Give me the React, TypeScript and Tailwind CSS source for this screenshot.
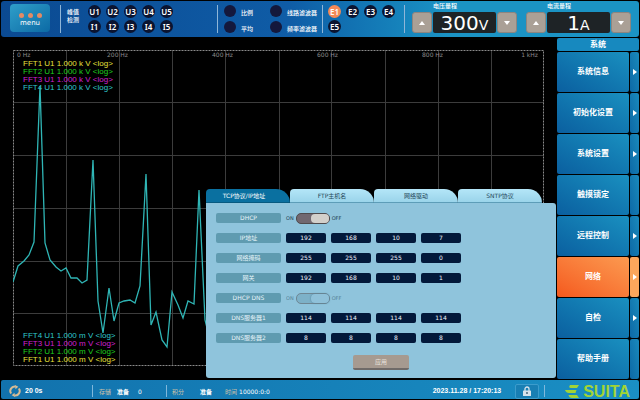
import { useState } from 'react'
import type { ReactNode } from 'react'
import clsx from 'clsx'

const UI_FONT = "font-['DejaVu_Sans','Noto_Sans_CJK_SC',sans-serif]"
const KEY_FONT = "font-['Noto_Sans','Noto_Sans_CJK_SC',sans-serif]"
const ARIAL_FONT = "font-['Liberation_Sans','Noto_Sans_CJK_SC',sans-serif]"

const CHANNELS = ['U1', 'U2', 'U3', 'U4', 'U5', 'I1', 'I2', 'I3', 'I4', 'I5']
const ELEMENTS = ['E1', 'E2', 'E3', 'E4', 'E5']

const MENU = [
  { label: '系统信息', arrow: true },
  { label: '初始化设置', arrow: true },
  { label: '系统设置', arrow: true },
  { label: '触摸锁定', arrow: false },
  { label: '远程控制', arrow: true },
  { label: '网络', arrow: true },
  { label: '自检', arrow: true },
  { label: '帮助手册', arrow: false },
]

const TABS = ['TCP协议/IP地址', 'FTP主机名', '网络驱动', 'SNTP协议']

const TRACES = [
  { name: 'FFT1 U1', color: 'text-[#e6e03c]' },
  { name: 'FFT2 U1', color: 'text-[#1fd01f]' },
  { name: 'FFT3 U1', color: 'text-[#d020d0]' },
  { name: 'FFT4 U1', color: 'text-[#2fc8cc]' },
]

const TICKS = ['0 Hz', '200 Hz', '400 Hz', '600 Hz', '800 Hz']

const SPECTRUM =
  '0,232 5,216 11,211 16,205 21,192 27,36 32,193 37,210 43,217 48,221 53,218 58,228 64,228 69,233 74,230 80,110 85,251 90,283 96,238 101,271 106,253 111,251 117,250 122,253 127,236 133,124 138,275 143,262 149,290 154,297 159,242 165,255 170,268 175,251 181,254 186,140 192,270 197,290 202,262'

function Divider() {
  return <div className="h-7 w-px shrink-0 bg-[#8fb6d8]" />
}

function RoundButton({ label, active = false }: { label: string; active?: boolean }) {
  return (
    <button
      type="button"
      className={clsx(
        'flex size-[13px] items-center justify-center rounded-full text-[8px] leading-none font-semibold text-white',
        KEY_FONT,
        active ? 'bg-[#f58a57]' : 'bg-[#0b1430]',
      )}
    >
      {label}
    </button>
  )
}

function Lamp({ label }: { label: string }) {
  return (
    <button
      type="button"
      className="flex items-center gap-[5px] text-[6px] leading-none font-medium whitespace-nowrap text-white"
    >
      <span className="size-3 shrink-0 rounded-full bg-[#14183c]" />
      <span className="pt-[3px]">{label}</span>
    </button>
  )
}

function StepButton({ up = false, label }: { up?: boolean; label: string }) {
  return (
    <button
      type="button"
      aria-label={label}
      className="flex h-[21px] w-5 items-center justify-center rounded-[3px] border border-[#8d8580] bg-[#aaa096]"
    >
      <svg viewBox="0 0 6 4" className="h-1 w-1.5 fill-white">
        <path d={up ? 'M0 4 3 0 6 4Z' : 'M0 0 3 4 6 0Z'} />
      </svg>
    </button>
  )
}

function RangeControl({ title, value, unit }: { title: string; value: string; unit: string }) {
  return (
    <div className="grid grid-cols-[20px_63px_20px] gap-x-px">
      <div className="col-start-2 h-[10px] text-[6px] leading-[7px] font-medium text-white">{title}</div>
      <div className="col-start-1 row-start-2">
        <StepButton up label={`${title} +`} />
      </div>
      <div className="row-start-2 flex h-[21px] items-baseline justify-center rounded-[2px] bg-[#1e2326] text-[20px] leading-[22px] text-white">
        {value}
        <span className="text-[14px] leading-[14px]">{unit}</span>
      </div>
      <div className="row-start-2">
        <StepButton label={`${title} -`} />
      </div>
    </div>
  )
}

function Header() {
  return (
    <header className="mx-px mt-px flex h-[36px] items-start rounded-[3px] bg-linear-to-r from-[#0b4a92] via-[#0f5ca6] via-45% to-[#1b93c4] to-70% pl-[9px]">
      <button
        type="button"
        className="mt-[3px] flex h-7 w-10 shrink-0 flex-col items-center justify-center gap-px rounded-[4px] bg-linear-to-br from-[#2f9fc9] to-[#0b6aa5] pt-[3px] text-[7px] leading-[8px] text-white"
      >
        <span className="flex gap-1">
          <i className="size-[5px] rounded-full bg-[#e58a64]" />
          <i className="size-[5px] rounded-full bg-[#e58a64]" />
          <i className="size-[5px] rounded-full bg-[#e58a64]" />
        </span>
        menu
      </button>
      <div className="mt-1 ml-[10px] flex flex-1 items-start">
        <Divider />
        <div className="mt-[3px] ml-1.5 w-3 text-[6px] leading-[8px] font-medium text-white">峰值检测</div>
        <div className="ml-[9px] grid grid-cols-[repeat(5,13px)] gap-x-[5px] gap-y-[2px]">
          {CHANNELS.map((c) => (
            <RoundButton key={c} label={c} />
          ))}
        </div>
        <div className="ml-[44px]">
          <Divider />
        </div>
        <div className="ml-[6px] grid grid-cols-[46px_46px] gap-y-1">
          <Lamp label="比例" />
          <Lamp label="线路滤波器" />
          <Lamp label="平均" />
          <Lamp label="频率滤波器" />
        </div>
        <div className="ml-[6px]">
          <Divider />
        </div>
        <div className="ml-[5px] grid grid-cols-[repeat(4,13px)] gap-x-[5px] gap-y-[2px]">
          {ELEMENTS.map((e) => (
            <RoundButton key={e} label={e} active={e === 'E1'} />
          ))}
        </div>
        <div className="ml-[9px]">
          <Divider />
        </div>
      </div>
      <div className="mt-px mr-2 flex gap-[9px]">
        <RangeControl title="电压量程" value="300" unit="V" />
        <RangeControl title="电流量程" value="1" unit="A" />
      </div>
    </header>
  )
}

function TraceLegend({ unit, reverse = false }: { unit: string; reverse?: boolean }) {
  return (
    <ul className={clsx('flex text-[8px] leading-[8px]', ARIAL_FONT, reverse ? 'flex-col-reverse' : 'flex-col')}>
      {TRACES.map((t) => (
        <li key={t.name} className={t.color}>
          {t.name} 1.000 {unit} V &lt;log&gt;
        </li>
      ))}
    </ul>
  )
}

function Spectrum() {
  return (
    <div className="relative flex flex-1 flex-col px-[13px] py-[13px]">
      <svg viewBox="0 0 531 316" preserveAspectRatio="none" className="min-h-0 w-full flex-1 basis-0" fill="none">
        <g stroke="#3c3c3c">
          {[53, 106, 159, 212, 266, 318, 372, 425, 478].map((x) => (
            <path key={x} d={`M${x}.5 0V316`} />
          ))}
          {[52, 105, 158, 211, 263].map((y) => (
            <path key={y} d={`M0 ${y}.5H531`} />
          ))}
        </g>
        <rect x="0.5" y="0.5" width="530" height="315" stroke="#8a8a8a" strokeDasharray="2 1" />
        <polyline points={SPECTRUM} stroke="#2fb5b5" strokeWidth="1.3" />
      </svg>
      <div className="absolute inset-x-[13px] top-[14px] bottom-[15px] flex flex-col justify-between">
        <div>
          <div className="grid grid-cols-5 pr-1.5 text-[6px] leading-[8px] text-[#8c8c8c]">
            {TICKS.map((t, i) => (
              <div key={t} className={i === 0 ? 'pl-1' : '-ml-[11px] flex justify-between'}>
                <span>{t}</span>
                {i === TICKS.length - 1 && <span>1 kHz</span>}
              </div>
            ))}
          </div>
          <div className="pt-px pl-[10px]">
            <TraceLegend unit="k" />
          </div>
        </div>
        <div className="pl-[10px]">
          <TraceLegend unit="m" reverse />
        </div>
      </div>
      <NetworkDialog />
    </div>
  )
}

function SettingRow({ label, children }: { label: string; children: ReactNode }) {
  return (
    <div role="group" aria-label={label} className="flex h-5 items-center gap-[5px]">
      <span className="h-[10px] w-[65px] rounded-[2px] bg-[#5f9bb0] text-center leading-[10px] text-[#e6f4fa]">
        {label}
      </span>
      {children}
    </div>
  )
}

function Toggle({ label, disabled = false }: { label: string; disabled?: boolean }) {
  const [on, setOn] = useState(true)
  return (
    <label className={clsx('flex items-center gap-[2px] text-[5px] leading-none text-[#22404f]', disabled && 'opacity-50')}>
      ON
      <input
        type="checkbox"
        aria-label={label}
        checked={on}
        disabled={disabled}
        onChange={() => setOn((v) => !v)}
        className={clsx(
          "flex h-[11px] w-[34px] appearance-none items-center rounded-[5px] border border-[#4f4a4c] before:h-[9px] before:w-[18px] before:rounded-[4px] before:content-['']",
          disabled ? 'bg-[#6c9fb6] before:bg-[#8fc0d8] before:shadow-[0_0_2px_#123a52]' : 'bg-[#716870] before:bg-[#d3d0cb]',
          on ? 'justify-end' : 'justify-start',
        )}
      />
      OFF
    </label>
  )
}

function Octets({ label, values }: { label: string; values: string[] }) {
  return (
    <SettingRow label={label}>
      {values.map((v, i) => (
        <input
          key={i}
          aria-label={`${label} ${i + 1}`}
          defaultValue={v}
          className="h-[10px] w-10 rounded-[2px] bg-[#03193a] text-center text-[6px] leading-[10px] text-[#f0f5fa]"
        />
      ))}
    </SettingRow>
  )
}

function NetworkDialog() {
  const [tab, setTab] = useState(TABS[0])
  return (
    <section className="absolute right-px bottom-px w-[350px] text-[6px]">
      <div role="tablist" className="mr-[14px] grid h-[14px] grid-cols-4">
        {TABS.map((t) => (
          <button
            key={t}
            type="button"
            role="tab"
            aria-selected={t === tab}
            onClick={() => setTab(t)}
            className={clsx(
              'rounded-tl-[4px] rounded-tr-[14px] border-b leading-[13px] first:pr-2',
              t === tab
                ? 'border-[#075a80] bg-[#0a70a0] text-white'
                : 'border-[#5d9db8] bg-linear-to-b from-[#b4e6f8] to-[#9ad4ea] text-[#24485a]',
            )}
          >
            {t}
          </button>
        ))}
      </div>
      <div className="flex flex-col rounded-b-[3px] rounded-tr-[3px] bg-[#8fc4dc] pt-[5px] pb-2 pl-[10px]">
        <SettingRow label="DHCP">
          <Toggle label="DHCP" />
        </SettingRow>
        <Octets label="IP地址" values={['192', '168', '10', '7']} />
        <Octets label="网络掩码" values={['255', '255', '255', '0']} />
        <Octets label="网关" values={['192', '168', '10', '1']} />
        <SettingRow label="DHCP DNS">
          <Toggle label="DHCP DNS" disabled />
        </SettingRow>
        <Octets label="DNS服务器1" values={['114', '114', '114', '114']} />
        <Octets label="DNS服务器2" values={['8', '8', '8', '8']} />
        <button
          type="button"
          className="mt-[7px] mr-[10px] h-[15px] w-14 self-center rounded-[2px] border-b-2 border-[#6f6a68] bg-[#a69a90] text-[#e8e2dc]"
        >
          应用
        </button>
      </div>
    </section>
  )
}

function Sidebar() {
  const [current, setCurrent] = useState('网络')
  return (
    <nav className="mt-px mr-px flex w-[82px] shrink-0 flex-col gap-px text-[8px] font-bold text-white">
      <h2 className="h-[13px] rounded-[2px] bg-[#1789bf] text-center leading-[13px]">系统</h2>
      {MENU.map((m) => {
        const active = m.label === current
        return (
          <button
            key={m.label}
            type="button"
            onClick={() => setCurrent(m.label)}
            className="grid min-h-10 flex-1 grid-cols-[1fr_9px] gap-px"
          >
            <span
              className={clsx(
                'flex items-center justify-center rounded-[2px] bg-linear-to-tr',
                active ? 'from-[#f4581c] to-[#fb9a50]' : 'from-[#0b5f9f] to-[#1a90c0]',
              )}
            >
              {m.label}
            </span>
            <span
              className={clsx(
                'flex items-center justify-center rounded-[2px]',
                active ? 'bg-[#fca65c]' : 'bg-linear-to-tr from-[#0d69a6] to-[#1a8abc]',
              )}
            >
              {m.arrow && (
                <svg viewBox="0 0 4 6" className="h-1.5 w-1 fill-white">
                  <path d="M0 0 4 3 0 6Z" />
                </svg>
              )}
            </span>
          </button>
        )
      })}
    </nav>
  )
}

function StatusBar() {
  return (
    <footer className="mx-px mt-px mb-px flex h-[19px] items-center rounded-[2px] bg-linear-to-r from-[#1272ad] to-[#1a8fc4] pt-[3px] text-[6px] text-white">
      <svg viewBox="0 0 12 12" className="ml-2 size-3" fill="none" stroke="#d8bc94" strokeWidth="2">
        <path d="M2.200 8.500A4.300 4.300 0 0 1 6.500 1.700M9.800 3.500A4.300 4.300 0 0 1 5.500 10.300" />
        <path d="M6 0 9.300 1.800 6.500 4.300ZM6 12 2.700 10.200 5.500 7.700Z" fill="#d8bc94" stroke="none" />
      </svg>
      <span className={clsx('ml-1 w-[67px] text-[7px] font-bold', ARIAL_FONT)}>20 0s</span>
      <i className="h-3 w-px bg-[#7fb8dc]" />
      <span className="ml-[6px] text-[#d0c2a8]">存储</span>
      <span className="ml-[6px] font-bold">准备</span>
      <span className="ml-[9px] w-[28px]">0</span>
      <i className="h-3 w-px bg-[#7fb8dc]" />
      <span className="ml-[5px] text-[#d0c2a8]">积分</span>
      <span className="ml-4 font-bold">准备</span>
      <span className="ml-[13px] text-[#d0c2a8]">时间</span>
      <span className="ml-[2px] flex-1">10000:0:0</span>
      <time className={clsx('text-[7px] font-bold', ARIAL_FONT)}>2023.11.28 / 17:20:13</time>
      <button
        type="button"
        aria-label="锁定"
        className="ml-[14px] flex h-[15px] w-6 items-center justify-center rounded-[2px] border border-[#3c9ccc] bg-[#187fb4]"
      >
        <svg viewBox="0 0 8 10" className="h-[10px] w-2">
          <path d="M2 5V3a2 2 0 0 1 4 0V5" fill="none" stroke="#d8e4ec" strokeWidth="1.3" />
          <rect y="4.500" width="8" height="5.500" rx="0.600" fill="#d8e4ec" />
          <circle cx="4" cy="7" r="0.900" fill="#3b5a70" />
        </svg>
      </button>
      <i className="ml-[5px] h-3 w-px bg-[#7fb8dc]" />
      <div className="mr-[9px] ml-[20px] flex items-center gap-1 text-[#a2d435]">
        <svg viewBox="0 0 14 13" className="h-[13px] w-[14px] fill-current">
          <path d="M5 0H14L12 3H6Q3 3 5 0ZM0 5H11.500L10.500 8H4Q1 8 0 5ZM3.500 10H12L14 13H7Q4 13 3.500 10Z" />
        </svg>
        <span className={clsx('text-[16px] leading-[15px] font-bold', ARIAL_FONT)}>SUITA</span>
      </div>
    </footer>
  )
}

export default function App() {
  return (
    <div className={clsx('flex min-h-screen flex-col bg-black', UI_FONT)}>
      <Header />
      <main className="flex flex-1">
        <Spectrum />
        <Sidebar />
      </main>
      <StatusBar />
    </div>
  )
}
